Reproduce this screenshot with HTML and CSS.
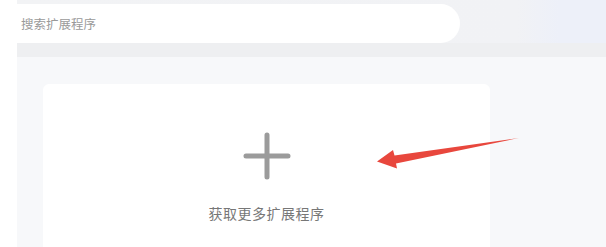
FILE: index.html
```html
<!DOCTYPE html>
<html lang="zh-CN">
<head>
    <meta charset="UTF-8">
    <meta name="viewport" content="width=device-width, initial-scale=1.0">
    <title>扩展程序</title>
    <link rel="stylesheet" href="styles.css">
</head>
<body>

    <div class="sidebar"></div>

    <div class="main">
        <header class="topbar">
            <div class="search">
                <input type="text" placeholder="搜索扩展程序">
            </div>
        </header>

        <section class="content">
            <div class="card">
                <svg class="plus" width="48" height="48" viewBox="0 0 48 48">
                    <path d="M24 3 V45 M3 24 H45" stroke="#9b9b9b" stroke-width="5" stroke-linecap="round" fill="none"/>
                </svg>
                <p class="card-label">获取更多扩展程序</p>
            </div>
        </section>
    </div>

    <!-- annotation arrow drawn over the page -->
    <svg class="arrow" width="606" height="247" viewBox="0 0 606 247">
        <polygon points="519,138 396,163.5 397,168.5 377,161.5 393,150 394.5,155.5" fill="#e8473d"/>
    </svg>

</body>
</html>
```

FILE: styles.css
```css
body {
    margin: 0;
    padding: 0;
    display: flex;
    height: 247px;
    overflow: hidden;
    font-family: 'Noto Sans CJK SC', 'Noto Sans', sans-serif;
    background-color: #fff;
}

.sidebar {
    width: 17px;
    flex-shrink: 0;
    background-color: #fff;
}

.main {
    flex: 1;
    display: flex;
    flex-direction: column;
}

.topbar {
    height: 57px;
    box-sizing: border-box;
    padding-top: 4px;
    background: linear-gradient(to right, #f2f3f5 0%, #f1f2f5 85%, #edf0f9 92%, #edf0f9 100%);
    border-bottom: 14px solid #eeeff1;
}

.search {
    width: 443px;
    height: 39px;
    background-color: #fff;
    border-radius: 0 20px 20px 0;
    display: flex;
    align-items: center;
}

.search input {
    border: none;
    outline: none;
    background: transparent;
    padding: 0 0 0 4px;
    font-family: inherit;
    font-size: 12.5px;
    width: 100%;
}

.search input::placeholder {
    color: #9a9a9a;
}

.content {
    height: 190px;
    box-sizing: border-box;
    background-color: #f7f8fa;
    padding: 27px 116px 0 26px;
}

.card {
    height: 163px;
    background-color: #fff;
    border-radius: 6px 6px 0 0;
    display: flex;
    flex-direction: column;
    align-items: center;
    padding-top: 48px;
    box-sizing: border-box;
}

.plus {
    display: block;
}

.card-label {
    margin: 23px 0 0;
    font-size: 14px;
    line-height: 20px;
    color: #777;
    letter-spacing: 0.5px;
}

.arrow {
    position: absolute;
    left: 0;
    top: 0;
    pointer-events: none;
}
```
